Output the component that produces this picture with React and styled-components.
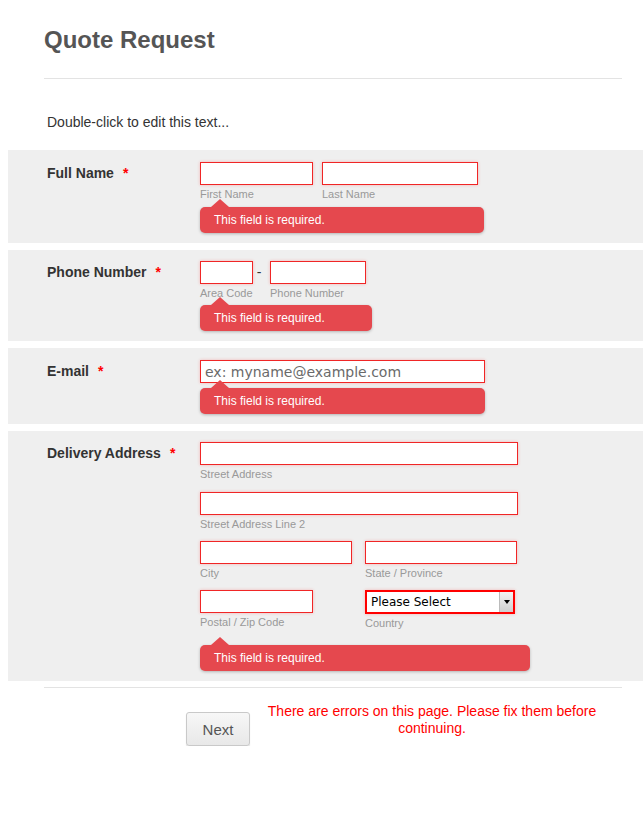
import React from "react";
import styled, { createGlobalStyle } from "styled-components";

const GlobalStyle = createGlobalStyle`
  body {
    margin: 0;
    background: #fff;
    font-family: "Liberation Sans", Arial, sans-serif;
    color: #333;
  }
`;

const Page = styled.div`
  width: 643px;
  padding-left: 8px;
  box-sizing: border-box;
`;

const Header = styled.div`
  margin: 0 21px 0 36px;
  padding-top: 26px;
  border-bottom: 1px solid #e3e3e3;
  height: 52px;
`;

const Title = styled.h1`
  margin: 0;
  font-size: 24px;
  line-height: 28px;
  font-weight: bold;
  color: #555;
`;

const Intro = styled.p`
  margin: 0;
  padding: 35px 0 19px 39px;
  font-size: 14px;
  line-height: 17px;
  color: #333;
`;

const Section = styled.div`
  display: grid;
  grid-template-columns: 192px 1fr;
  padding: ${(p) => p.$pad || "12px 0 10px"};
  margin-bottom: 7px;
  background-color: #efefef;
`;

const Label = styled.div`
  padding-left: 39px;
  font-size: 14px;
  font-weight: bold;
  line-height: 23px;
  color: #333;
`;

const Star = styled.span`
  color: #f00;
  margin-left: 9px;
`;

const Fields = styled.div`
  display: flex;
  flex-direction: column;
  align-items: flex-start;
`;

const Row = styled.div`
  display: flex;
  align-items: flex-start;
  gap: ${(p) => p.$gap || 9}px;
`;

const Grid = styled.div`
  display: grid;
  grid-template-columns: 152px 152px;
  column-gap: 13px;
`;

const Field = styled.div`
  display: flex;
  flex-direction: column;
  margin-bottom: ${(p) => p.$mb || 0}px;
`;

const Input = styled.input`
  box-sizing: border-box;
  width: ${(p) => p.$w}px;
  height: 23px;
  margin: 0;
  padding: 0 4px;
  border: 1px solid #f02626;
  background: #fff;
  box-shadow: 0 0 3px rgba(255, 60, 60, 0.3);
  font-family: "DejaVu Sans", Verdana, sans-serif;
  font-size: 14px;
  color: #444;
  outline: none;

  &::placeholder {
    color: #6a6a6a;
  }
`;

const Sub = styled.span`
  margin-top: 3px;
  font-size: 11px;
  line-height: 12px;
  color: #999;
`;

const Dash = styled.span`
  width: 8px;
  margin-right: 5px;
  font-size: 14px;
  line-height: 23px;
  color: #333;
  text-align: center;
`;

const ErrorBox = styled.div`
  position: relative;
  box-sizing: border-box;
  width: ${(p) => p.$w}px;
  height: 26px;
  margin-top: ${(p) => p.$mt || 7}px;
  padding-left: 14px;
  border-radius: 5px;
  background: #e5484e;
  box-shadow: 0 1px 3px rgba(0, 0, 0, 0.25);
  font-size: 12px;
  line-height: 26px;
  color: #fff;

  &::before {
    content: "";
    position: absolute;
    left: 11px;
    top: -8px;
    border-left: 9px solid transparent;
    border-right: 9px solid transparent;
    border-bottom: 8px solid #e5484e;
  }
`;

const SelectWrap = styled.div`
  position: relative;
  box-sizing: border-box;
  width: 150px;
  height: 24px;
  border: 2px solid #f00;
  background: #fff;
  box-shadow: 0 0 3px rgba(255, 60, 60, 0.3);
`;

const Select = styled.select`
  appearance: none;
  width: 100%;
  height: 100%;
  margin: 0;
  padding: 0 0 0 4px;
  border: none;
  background: transparent;
  font-family: "DejaVu Sans", Verdana, sans-serif;
  font-size: 12px;
  color: #000;
  outline: none;
`;

const SelectArrow = styled.span`
  position: absolute;
  right: 0;
  top: 0;
  bottom: 0;
  width: 13px;
  display: flex;
  align-items: center;
  justify-content: center;
  border-left: 1px solid #bbb;
  background: linear-gradient(#f4f4f4, #cfcfcf);
  pointer-events: none;

  &::after {
    content: "";
    border-left: 3px solid transparent;
    border-right: 3px solid transparent;
    border-top: 4px solid #000;
  }
`;

const Divider = styled.div`
  margin: -1px 21px 0 36px;
  border-top: 1px solid #e3e3e3;
`;

const Footer = styled.div`
  display: flex;
  align-items: flex-start;
  padding: 15px 0 0 178px;
`;

const NextButton = styled.button`
  box-sizing: border-box;
  width: 64px;
  height: 34px;
  margin-top: 9px;
  border: 1px solid #c9c9c9;
  border-radius: 3px;
  background: linear-gradient(#f7f7f7, #e8e8e8);
  box-shadow: 0 1px 1px rgba(0, 0, 0, 0.15);
  font-family: "Liberation Sans", Arial, sans-serif;
  font-size: 15px;
  color: #555;
`;

const PageError = styled.div`
  width: 340px;
  margin-left: 12px;
  font-size: 14px;
  line-height: 17px;
  color: #f00;
  text-align: center;
`;

export default function App() {
  return (
    <Page>
      <GlobalStyle />
      <Header>
        <Title>Quote Request</Title>
      </Header>
      <Intro>Double-click to edit this text...</Intro>

      <Section $pad="12px 0 10px">
        <Label>
          Full Name<Star>*</Star>
        </Label>
        <Fields>
          <Row>
            <Field>
              <Input $w={113} />
              <Sub>First Name</Sub>
            </Field>
            <Field>
              <Input $w={156} />
              <Sub>Last Name</Sub>
            </Field>
          </Row>
          <ErrorBox $w={284}>This field is required.</ErrorBox>
        </Fields>
      </Section>

      <Section $pad="11px 0 10px">
        <Label>
          Phone Number<Star>*</Star>
        </Label>
        <Fields>
          <Row $gap={2}>
            <Field>
              <Input $w={53} />
              <Sub>Area Code</Sub>
            </Field>
            <Dash>-</Dash>
            <Field>
              <Input $w={96} />
              <Sub>Phone Number</Sub>
            </Field>
          </Row>
          <ErrorBox $w={172} $mt={6}>
            This field is required.
          </ErrorBox>
        </Fields>
      </Section>

      <Section $pad="12px 0 10px">
        <Label>
          E-mail<Star>*</Star>
        </Label>
        <Fields>
          <Input $w={285} placeholder="ex: myname@example.com" />
          <ErrorBox $w={285} $mt={5}>
            This field is required.
          </ErrorBox>
        </Fields>
      </Section>

      <Section $pad="11px 0 10px">
        <Label>
          Delivery Address<Star>*</Star>
        </Label>
        <Fields>
          <Field $mb={12}>
            <Input $w={318} />
            <Sub>Street Address</Sub>
          </Field>
          <Field $mb={11}>
            <Input $w={318} />
            <Sub>Street Address Line 2</Sub>
          </Field>
          <Grid>
            <Field $mb={11}>
              <Input $w={152} />
              <Sub>City</Sub>
            </Field>
            <Field $mb={11}>
              <Input $w={152} />
              <Sub>State / Province</Sub>
            </Field>
            <Field $mb={10}>
              <Input $w={113} />
              <Sub>Postal / Zip Code</Sub>
            </Field>
            <Field $mb={10}>
              <SelectWrap>
                <Select defaultValue="">
                  <option value="">Please Select</option>
                </Select>
                <SelectArrow />
              </SelectWrap>
              <Sub>Country</Sub>
            </Field>
          </Grid>
          <ErrorBox $w={330} $mt={6}>
            This field is required.
          </ErrorBox>
        </Fields>
      </Section>

      <Divider />
      <Footer>
        <NextButton type="button">Next</NextButton>
        <PageError>
          There are errors on this page. Please fix them before continuing.
        </PageError>
      </Footer>
    </Page>
  );
}
